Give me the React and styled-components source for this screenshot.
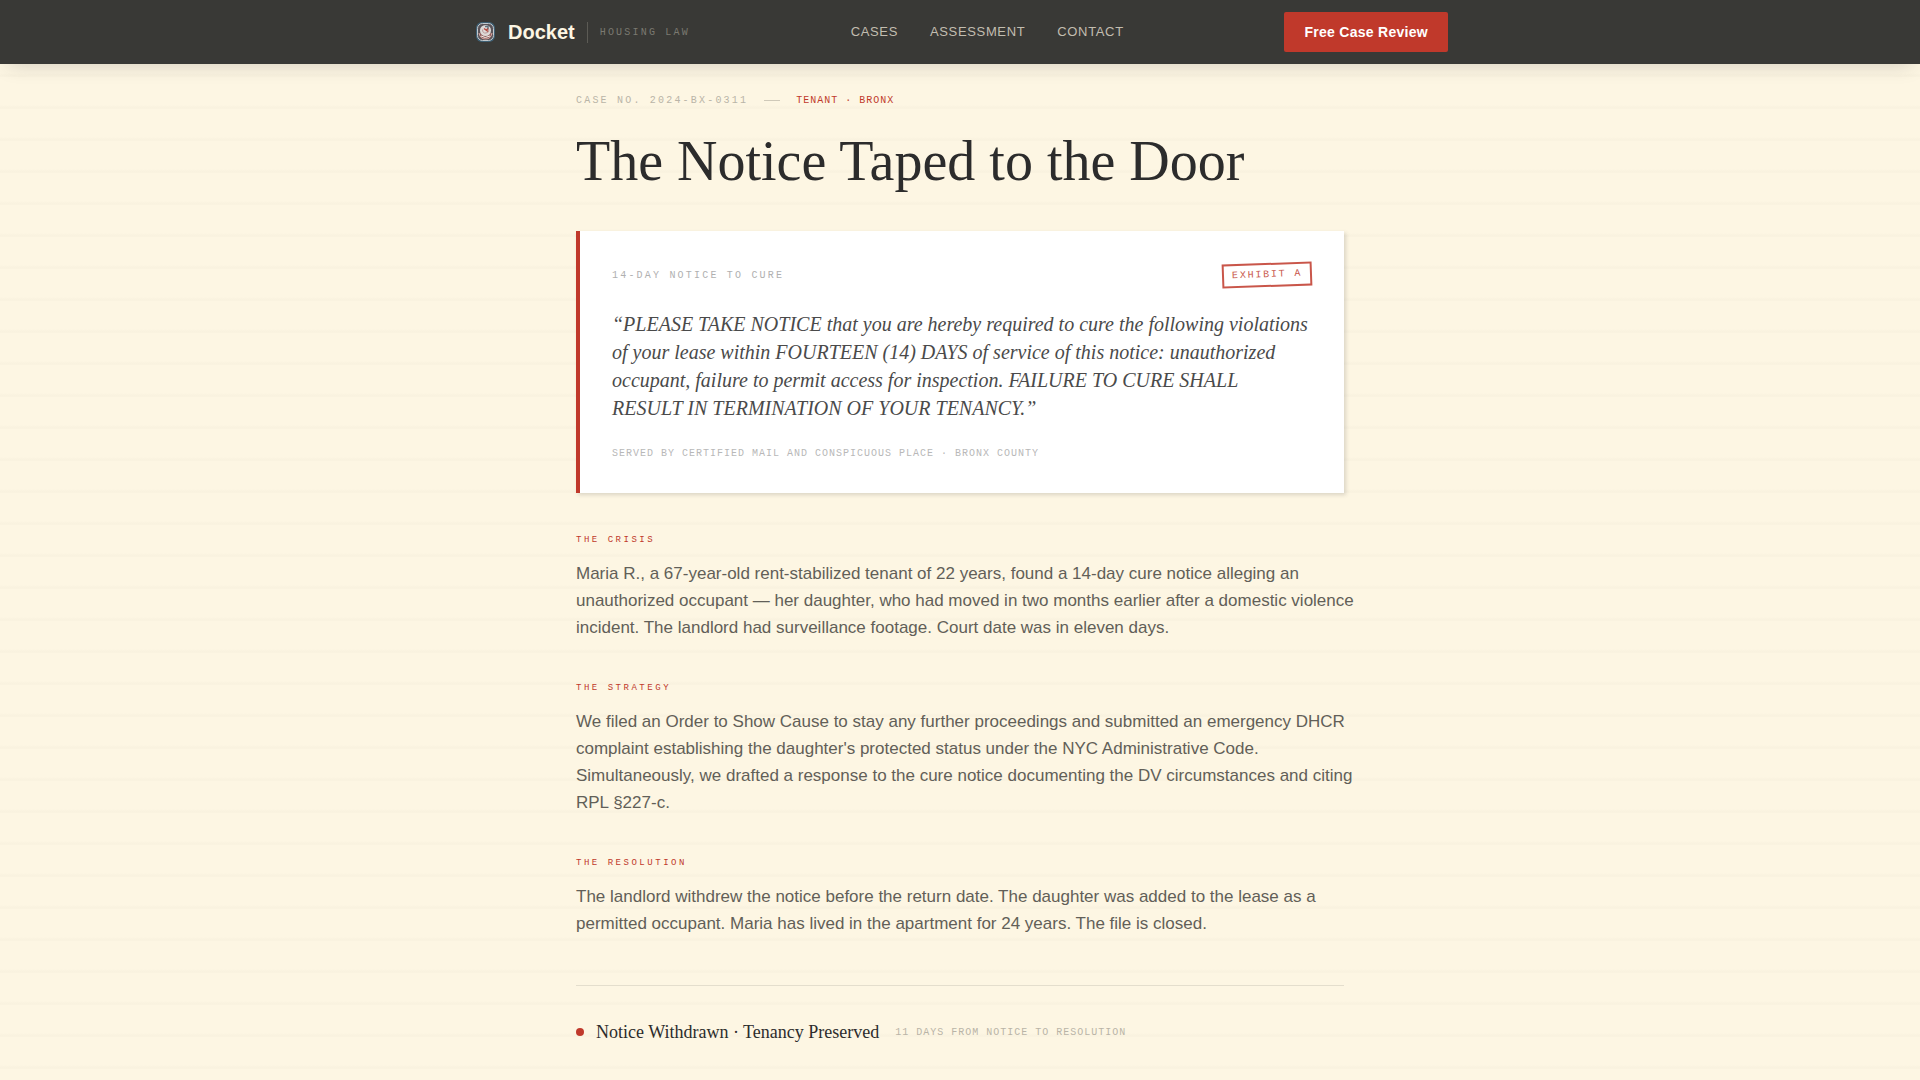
import * as React from "react"
import styled, { createGlobalStyle } from "styled-components"

const sans = `"Liberation Sans", Arial, sans-serif`
const serif = `"Liberation Serif", "Times New Roman", serif`
const mono = `"Liberation Mono", "Courier New", monospace`

const GlobalStyle = createGlobalStyle`
  :root {
    --color-ink: #2c2c2c;
    --color-paper: #fdf6e3;
    --color-accent: #c0392b;
  }

  *, *::before, *::after {
    box-sizing: border-box;
  }

  body {
    margin: 0;
    background: var(--color-paper);
    color: var(--color-ink);
    font-family: ${sans};
  }

  h1, h2, p, blockquote {
    margin: 0;
  }
`

/* ruled paper, one faint line every 32px */
const Page = styled.div`
  min-height: 100vh;
  background-image: linear-gradient(
    transparent,
    transparent 28px,
    rgba(44, 44, 44, 0.014) 30px,
    rgba(44, 44, 44, 0.014) 32px
  );
  background-position: 0 13px;
  background-size: 100% 32px;
`

const Header = styled.header`
  position: sticky;
  top: 0;
  z-index: 1;
  background: #393936;
  box-shadow: 0 8px 20px -8px rgba(44, 44, 44, 0.22);
`

const HeaderInner = styled.div`
  display: flex;
  align-items: center;
  justify-content: space-between;
  max-width: 1024px;
  height: 64px;
  margin: 0 auto;
  padding: 0 24px;
`

const Brand = styled.a`
  display: flex;
  align-items: center;
  gap: 8px;
  color: var(--color-paper);
  text-decoration: none;
`

const BrandName = styled.span`
  font-size: 20px;
  font-weight: 700;
  line-height: 28px;
`

const BrandTag = styled.span`
  margin-left: 4px;
  padding-left: 12px;
  border-left: 1px solid #5c5b55;
  color: #7b7971;
  font-family: ${mono};
  font-size: 10px;
  letter-spacing: 0.22em;
  line-height: 21px;
`

const Nav = styled.nav`
  display: flex;
  gap: 32px;
`

const NavLink = styled.a`
  color: #c2bdb0;
  font-size: 13px;
  letter-spacing: 0.05em;
  line-height: 20px;
  text-decoration: none;

  &:hover {
    color: var(--color-paper);
  }
`

const ReviewButton = styled.button`
  height: 40px;
  padding: 0 20px;
  border: 0;
  border-radius: 2px;
  background: var(--color-accent);
  color: #fff;
  cursor: pointer;
  font-family: ${sans};
  font-size: 14px;
  font-weight: 700;
  letter-spacing: 0.02em;

  &:hover {
    filter: brightness(110%);
  }
`

const Article = styled.main`
  max-width: 816px;
  margin: 0 auto;
  padding: 29px 24px 40px;
`

const Meta = styled.div`
  display: flex;
  align-items: center;
  gap: 16px;
  margin-bottom: 23px;
`

const MonoText = styled.span`
  color: ${({ $tone }) => $tone || "#b9b4a7"};
  font-family: ${mono};
  font-size: 10px;
  letter-spacing: ${({ $wide }) => ($wide ? "0.22em" : "0.1em")};
  line-height: 15px;
  text-transform: uppercase;
`

const Dash = styled.span`
  width: 16px;
  height: 1px;
  background: #cfc9b9;
`

const Title = styled.h1`
  margin-bottom: 40px;
  font-family: ${serif};
  font-size: 56px;
  font-weight: 400;
  line-height: 60px;
`

const Notice = styled.section`
  margin-bottom: 40px;
  padding: 32px;
  border-left: 4px solid var(--color-accent);
  background: #fff;
  box-shadow: 2px 2px 4px rgba(44, 44, 44, 0.16);
`

const NoticeHead = styled.div`
  display: flex;
  align-items: center;
  justify-content: space-between;
  margin-bottom: 23px;
`

const Stamp = styled.span`
  padding: 4px 8px;
  border: 2px solid var(--color-accent);
  color: var(--color-accent);
  font-family: ${mono};
  font-size: 10px;
  letter-spacing: 0.18em;
  line-height: 12px;
  opacity: 0.85;
  text-transform: uppercase;
  transform: rotate(-2deg);
`

const Quote = styled.blockquote`
  margin-bottom: 24px;
  color: #4a4a4a;
  font-family: ${serif};
  font-size: 20px;
  font-style: italic;
  line-height: 28px;
`

const NoticeFoot = styled(MonoText)`
  display: block;
`

const Section = styled.section`
  margin-bottom: 40px;
`

const SectionLabel = styled.h2`
  margin-bottom: 12px;
  color: var(--color-accent);
  font-family: ${mono};
  font-size: 9px;
  font-weight: 400;
  letter-spacing: 0.28em;
  line-height: 15px;
  text-transform: uppercase;
`

/* long lines may hang a little into the gutter */
const Body = styled.p`
  margin-right: -12px;
  color: #625f58;
  font-size: 17px;
  line-height: 27px;
`

const Outcome = styled.footer`
  display: flex;
  align-items: center;
  margin-top: 48px;
  padding-top: 32px;
  border-top: 1px solid #e4decd;
`

const Dot = styled.span`
  width: 8px;
  height: 8px;
  margin-right: 12px;
  border-radius: 50%;
  background: var(--color-accent);
`

const OutcomeText = styled.span`
  margin-right: 16px;
  font-family: ${serif};
  font-size: 18px;
  line-height: 28px;
`

const Logo = () => (
  <svg width="28" height="28" viewBox="0 0 28 28" aria-hidden="true">
    <rect x="4" y="4" width="19" height="20" rx="6" fill="#3f6074" />
    <rect x="5.500" y="5.500" width="16" height="17" rx="5" fill="#5a5358" stroke="#c3cace" />
    <path d="M7 15q1 6 6.500 6t6.500-6" fill="#8f5d5c" stroke="#d8aaa3" />
    <circle cx="13.500" cy="12.500" r="5.500" fill="#dedad7" />
    <path d="M9 18q4 3 9 0" fill="none" stroke="#f3efea" />
    <path d="M10.500 11.500q0 4 3.500 3.500t3-3.500" fill="none" stroke="#b9989a" />
    <path d="M13 8.500h3v3" fill="none" stroke="#62737f" strokeWidth="1.500" />
    <path d="M12 10.500l4 3M16 10.500l-2 2" fill="none" stroke="#b5473d" strokeWidth="1.500" />
  </svg>
)

const sections = [
  {
    label: "The Crisis",
    text: "Maria R., a 67-year-old rent-stabilized tenant of 22 years, found a 14-day cure notice alleging an unauthorized occupant — her daughter, who had moved in two months earlier after a domestic violence incident. The landlord had surveillance footage. Court date was in eleven days.",
  },
  {
    label: "The Strategy",
    text: "We filed an Order to Show Cause to stay any further proceedings and submitted an emergency DHCR complaint establishing the daughter's protected status under the NYC Administrative Code. Simultaneously, we drafted a response to the cure notice documenting the DV circumstances and citing RPL §227-c.",
  },
  {
    label: "The Resolution",
    text: "The landlord withdrew the notice before the return date. The daughter was added to the lease as a permitted occupant. Maria has lived in the apartment for 24 years. The file is closed.",
  },
]

const App = () => {
  return (
    <Page>
      <GlobalStyle />
      <Header>
        <HeaderInner>
          <Brand href="#">
            <Logo />
            <BrandName>Docket</BrandName>
            <BrandTag>HOUSING LAW</BrandTag>
          </Brand>
          <Nav>
            <NavLink href="#cases">CASES</NavLink>
            <NavLink href="#assessment">ASSESSMENT</NavLink>
            <NavLink href="#contact">CONTACT</NavLink>
          </Nav>
          <ReviewButton type="button">Free Case Review</ReviewButton>
        </HeaderInner>
      </Header>
      <Article>
        <Meta>
          <MonoText $wide>Case No. 2024-BX-0311</MonoText>
          <Dash />
          <MonoText $tone="var(--color-accent)">Tenant · Bronx</MonoText>
        </Meta>
        <Title>The Notice Taped to the Door</Title>
        <Notice>
          <NoticeHead>
            <MonoText $wide $tone="#b0b0b0">
              14-Day Notice to Cure
            </MonoText>
            <Stamp>Exhibit A</Stamp>
          </NoticeHead>
          <Quote>
            “PLEASE TAKE NOTICE that you are hereby required to cure the
            following violations of your lease within FOURTEEN (14) DAYS of
            service of this notice: unauthorized occupant, failure to permit
            access for inspection. FAILURE TO CURE SHALL RESULT IN TERMINATION
            OF YOUR TENANCY.”
          </Quote>
          <NoticeFoot $tone="#b8b8b8">
            Served by certified mail and conspicuous place · Bronx County
          </NoticeFoot>
        </Notice>
        {sections.map(({ label, text }) => (
          <Section key={label}>
            <SectionLabel>{label}</SectionLabel>
            <Body>{text}</Body>
          </Section>
        ))}
        <Outcome>
          <Dot />
          <OutcomeText>Notice Withdrawn · Tenancy Preserved</OutcomeText>
          <MonoText>11 days from notice to resolution</MonoText>
        </Outcome>
      </Article>
    </Page>
  )
}

export default App
